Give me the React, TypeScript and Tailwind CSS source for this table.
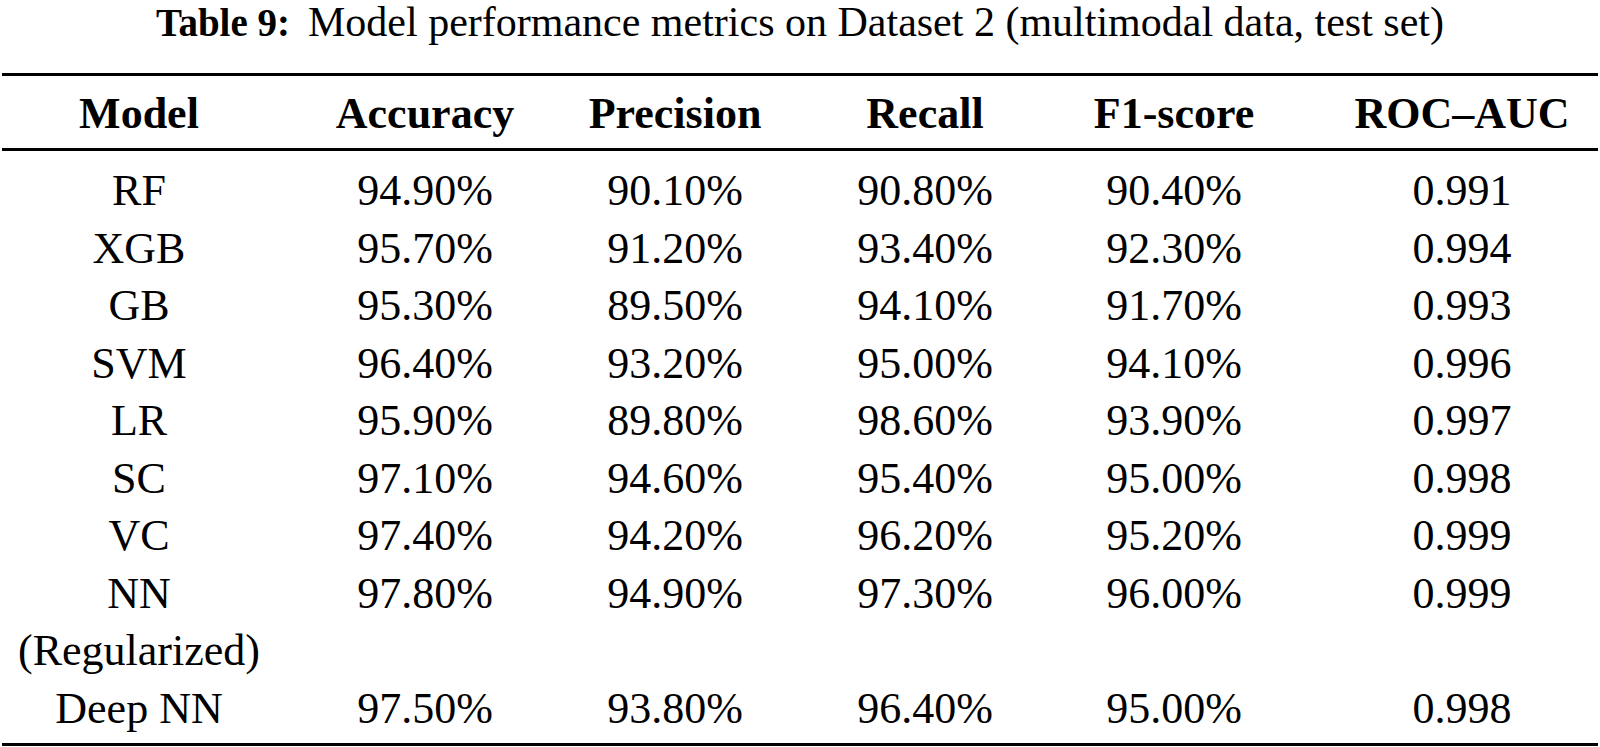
import React from "react";

type Row = { model: string[]; vals: string[] };

const rows: Row[] = [
  { model: ["RF"], vals: ["94.90%", "90.10%", "90.80%", "90.40%", "0.991"] },
  { model: ["XGB"], vals: ["95.70%", "91.20%", "93.40%", "92.30%", "0.994"] },
  { model: ["GB"], vals: ["95.30%", "89.50%", "94.10%", "91.70%", "0.993"] },
  { model: ["SVM"], vals: ["96.40%", "93.20%", "95.00%", "94.10%", "0.996"] },
  { model: ["LR"], vals: ["95.90%", "89.80%", "98.60%", "93.90%", "0.997"] },
  { model: ["SC"], vals: ["97.10%", "94.60%", "95.40%", "95.00%", "0.998"] },
  { model: ["VC"], vals: ["97.40%", "94.20%", "96.20%", "95.20%", "0.999"] },
  { model: ["NN", "(Regularized)"], vals: ["97.80%", "94.90%", "97.30%", "96.00%", "0.999"] },
  { model: ["Deep NN"], vals: ["97.50%", "93.80%", "96.40%", "95.00%", "0.998"] },
];

const headers = ["Model", "Accuracy", "Precision", "Recall", "F1-score", "ROC\u2013AUC"];

const gridCols = "grid grid-cols-[278px_294px_206px_294px_204px_324px]";

export default function App() {
  return (
    <div
      className="w-[1600px] h-[747px] bg-white text-black overflow-hidden"
      style={{ fontFamily: '"Liberation Serif", "Times New Roman", serif' }}
    >
      <div className="text-center text-[42px] leading-[44px] whitespace-nowrap">
        <span className="font-bold text-[39px]">Table 9:</span>
        <span className="inline-block w-[18px]" />
        <span>Model performance metrics on Dataset 2 (multimodal data, test set)</span>
      </div>

      <div className="mt-[28px] mx-[2px] h-[3px] bg-black" />

      <div className={`${gridCols} text-[44px] leading-[68px] pt-[4px] font-bold h-[72px]`}>
        {headers.map((h, i) => (
          <div key={h} className={`text-center whitespace-nowrap ${i === 5 ? "pl-[48px]" : ""}`}>
            {h}
          </div>
        ))}
      </div>

      <div className="mx-[2px] h-[3px] bg-black" />

      <div className="pt-[11px] pb-[6px] text-[44px] leading-[57.5px]">
        {rows.map((r) => (
          <div key={r.model.join(" ")} className={gridCols}>
            <div className="text-center whitespace-nowrap flex flex-col">
              {r.model.map((m) => (
                <span key={m}>{m}</span>
              ))}
            </div>
            {r.vals.map((v, i) => (
              <div key={i} className={`text-center whitespace-nowrap ${i === 4 ? "pl-[48px]" : ""}`}>
                {v}
              </div>
            ))}
          </div>
        ))}
      </div>

      <div className="mx-[2px] h-[3px] bg-black" />
    </div>
  );
}
